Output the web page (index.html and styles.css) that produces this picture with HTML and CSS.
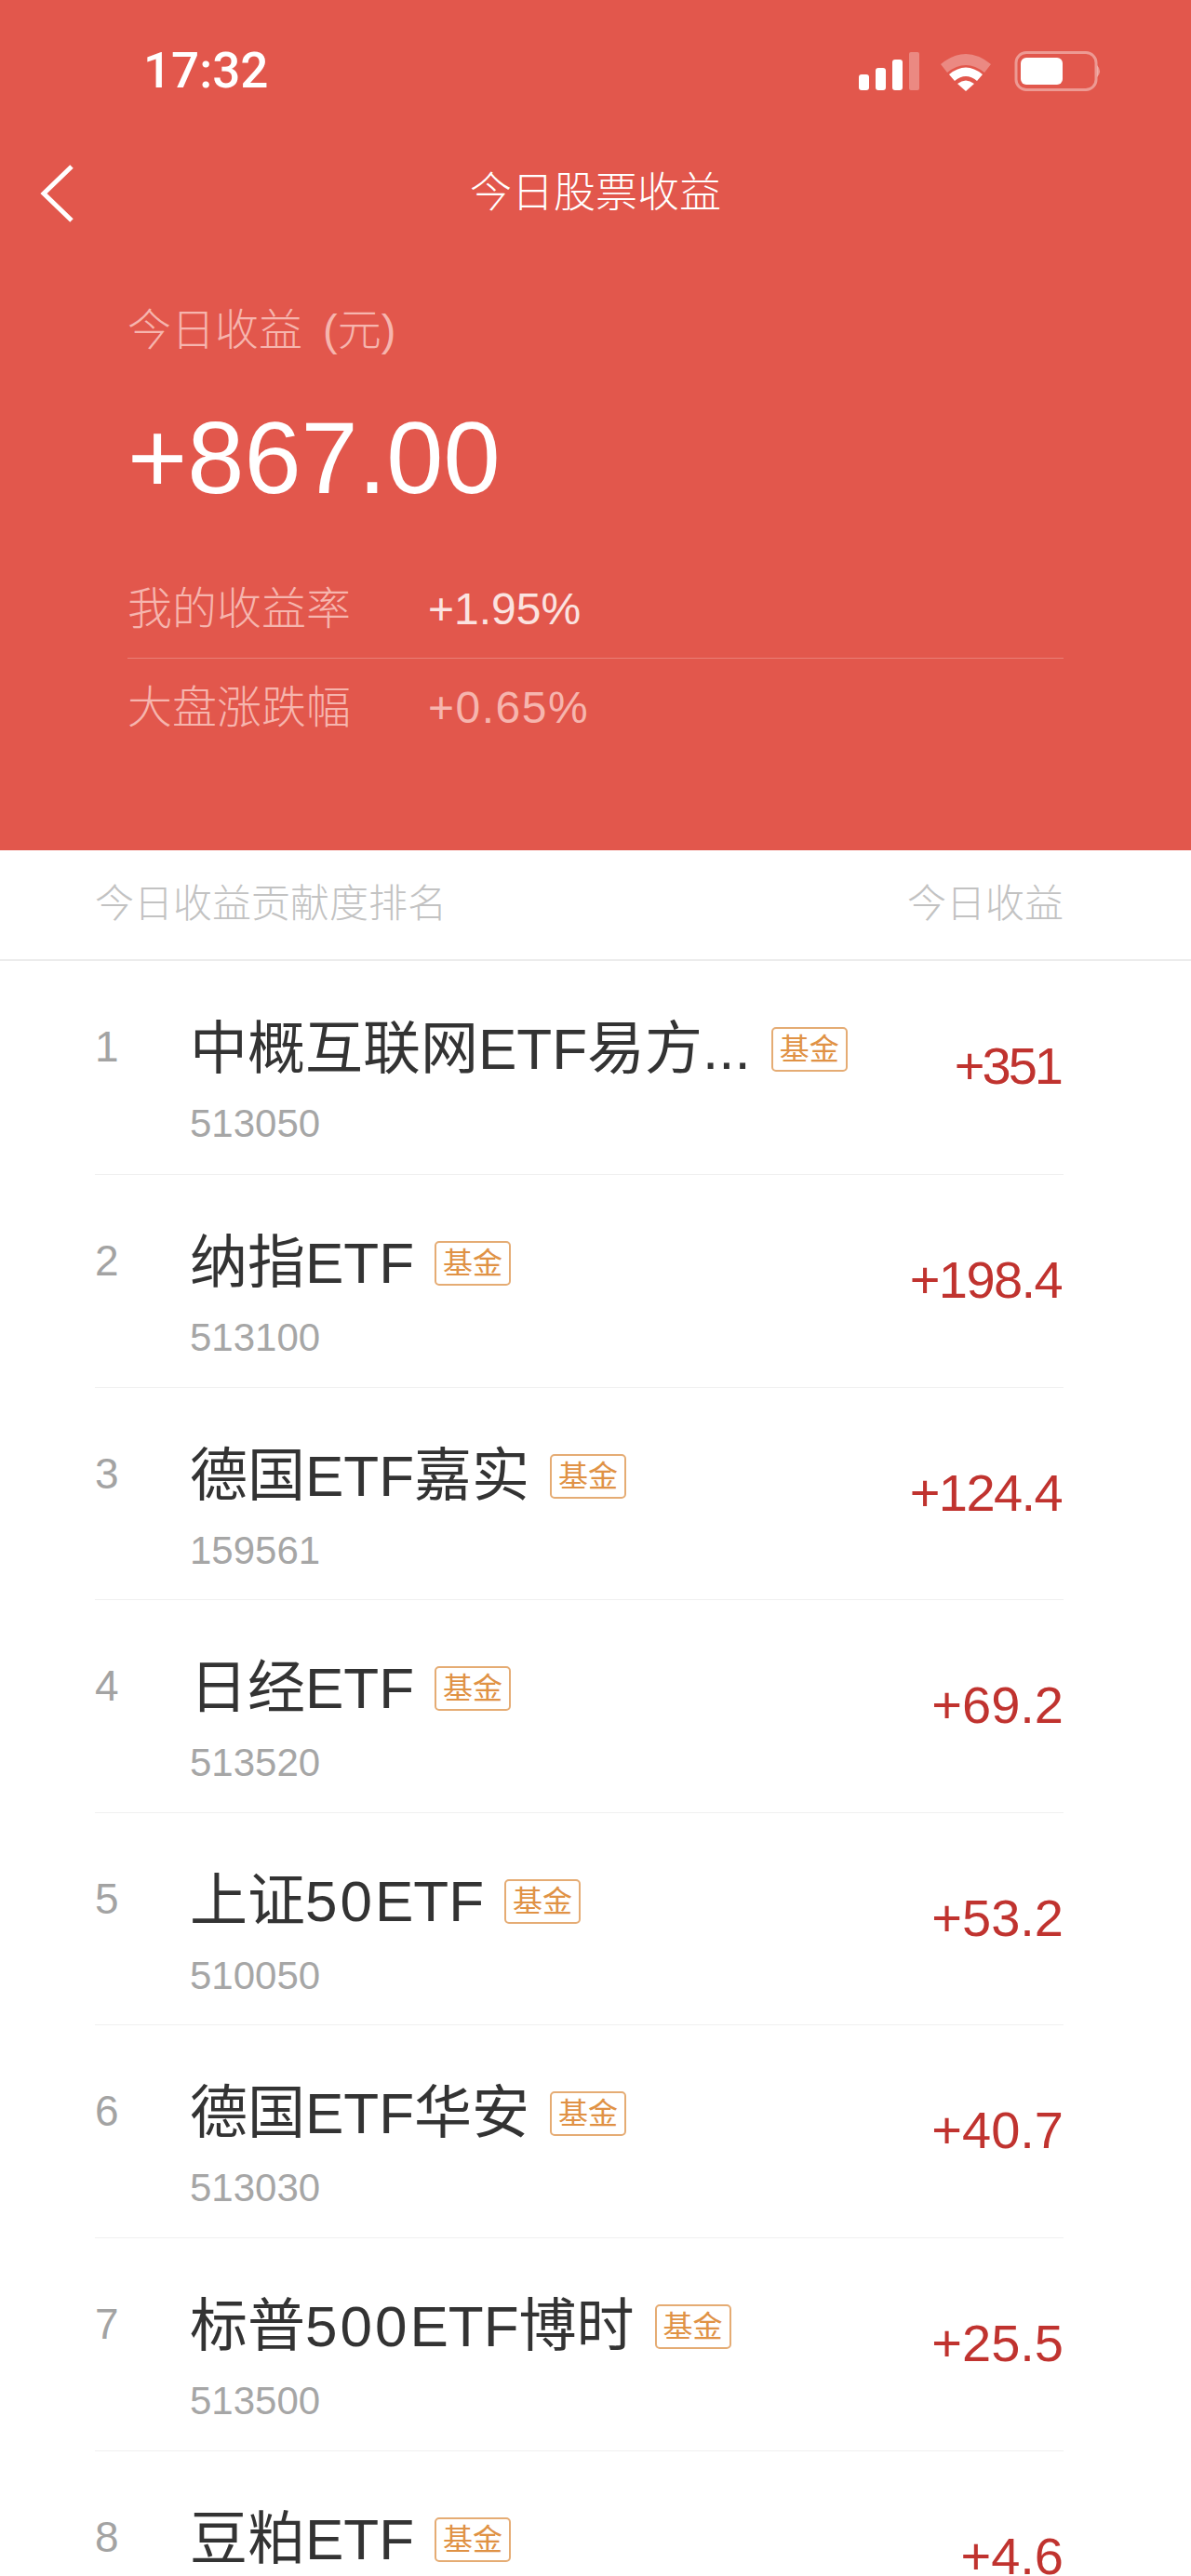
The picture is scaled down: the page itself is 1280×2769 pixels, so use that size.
FILE: index.html
```html
<!DOCTYPE html>
<html lang="zh-CN">
<head>
<meta charset="utf-8">
<title>今日股票收益</title>
<link rel="stylesheet" href="styles.css">
</head>
<body>
<div class="page">
  <header class="hero">
    <div class="status">
      <span class="time">17:32</span>
      <svg class="status-icons" width="264" height="44" viewBox="0 0 264 44">
        <g fill="#fff">
          <rect x="2" y="25" width="11" height="17" rx="3"/>
          <rect x="20" y="18" width="11" height="24" rx="3"/>
          <rect x="38" y="9" width="11" height="33" rx="3"/>
          <rect x="56" y="1" width="11" height="41" rx="2" opacity=".3"/>
        </g>
        <path d="M90 14 Q117 -8 144 14 L137 23 Q117 7 97 23 Z" fill="#fff" opacity=".3"/>
        <path d="M99 25 Q117 10 135 25 L129 32 Q117 22 105 32 Z" fill="#fff"/>
        <path d="M108 35 Q117 28 126 35 L117 43 Z" fill="#fff"/>
        <rect x="171" y="1.5" width="86" height="40" rx="11" fill="none" stroke="#fff" stroke-opacity=".4" stroke-width="3"/>
        <rect x="176" y="7" width="45" height="29" rx="6" fill="#fff"/>
        <path d="M258 15 Q264 21.500 258 28 Z" fill="#fff" opacity=".4"/>
      </svg>
    </div>
    <nav class="nav">
      <svg class="back" width="36" height="62" viewBox="0 0 36 62">
        <path d="M34 2 L4 31 L34 60" fill="none" stroke="#fff" stroke-width="5"/>
      </svg>
      <h1 class="title">今日股票收益</h1>
    </nav>
    <section class="summary">
      <div class="label">今日收益 (元)</div>
      <div class="amount">+867.00</div>
      <div class="stat stat-first">
        <span class="stat-key">我的收益率</span>
        <span class="stat-val">+1.95%</span>
      </div>
      <div class="stat stat-last">
        <span class="stat-key">大盘涨跌幅</span>
        <span class="stat-val stat-dim">+0.65%</span>
      </div>
    </section>
  </header>

  <div class="list-head">
    <span>今日收益贡献度排名</span>
    <span>今日收益</span>
  </div>

  <ul class="list">
    <li class="row"><span class="rank">1</span><div class="info"><div class="name-line"><span class="name">中概互联网ETF易方...</span><span class="tag">基金</span></div><div class="code">513050</div></div><span class="value value-tighter">+351</span></li>
    <li class="row"><span class="rank">2</span><div class="info"><div class="name-line"><span class="name">纳指ETF</span><span class="tag">基金</span></div><div class="code">513100</div></div><span class="value value-tight">+198.4</span></li>
    <li class="row"><span class="rank">3</span><div class="info"><div class="name-line"><span class="name">德国ETF嘉实</span><span class="tag">基金</span></div><div class="code">159561</div></div><span class="value value-tight">+124.4</span></li>
    <li class="row"><span class="rank">4</span><div class="info"><div class="name-line"><span class="name">日经ETF</span><span class="tag">基金</span></div><div class="code">513520</div></div><span class="value">+69.2</span></li>
    <li class="row"><span class="rank">5</span><div class="info"><div class="name-line"><span class="name">上证<span class="digits">50</span>ETF</span><span class="tag">基金</span></div><div class="code">510050</div></div><span class="value">+53.2</span></li>
    <li class="row"><span class="rank">6</span><div class="info"><div class="name-line"><span class="name">德国ETF华安</span><span class="tag">基金</span></div><div class="code">513030</div></div><span class="value">+40.7</span></li>
    <li class="row"><span class="rank">7</span><div class="info"><div class="name-line"><span class="name">标普<span class="digits">500</span>ETF博时</span><span class="tag">基金</span></div><div class="code">513500</div></div><span class="value">+25.5</span></li>
    <li class="row"><span class="rank">8</span><div class="info"><div class="name-line"><span class="name">豆粕ETF</span><span class="tag">基金</span></div></div><span class="value">+4.6</span></li>
  </ul>
</div>
</body>
</html>
```

FILE: styles.css
```css
* { box-sizing: border-box; margin: 0; padding: 0; }
html, body { background: #fff; }
body {
  font-family: "Liberation Sans", "Noto Sans CJK SC", sans-serif;
  font-weight: 400;
}
.page { width: 1280px; height: 2769px; overflow: hidden; }

.hero { height: 914px; background: #e2574c; color: #fff; padding-top: 50px; }

.status {
  height: 52px;
  padding: 0 95px 0 154px;
  display: flex;
  justify-content: space-between;
  align-items: center;
}
.time { font-family: Roboto, sans-serif; font-size: 53px; line-height: 52px; font-weight: 500; }
.status-icons { display: block; margin-top: 2px; }

.nav {
  margin-top: 66px;
  height: 80px;
  display: flex;
  align-items: center;
  justify-content: center;
  position: relative;
}
.back { position: absolute; left: 43px; top: 9px; }
.title { font-size: 45px; line-height: 80px; font-weight: 300; }

.summary { padding: 0 137px; margin-top: 77px; }
.label { font-size: 47px; line-height: 60px; font-weight: 300; word-spacing: 9px; color: #f6b5ae; }
.amount { margin-top: 47px; font-size: 110px; line-height: 120px; }
.stat {
  height: 105px;
  display: flex;
  align-items: center;
  border-bottom: 1px solid #ea7f76;
}
.stat-first { margin-top: 51px; }
.stat-last { border-bottom: 0; }
.stat-key { width: 323px; font-size: 48px; line-height: 60px; font-weight: 300; color: #f6b5ae; }
.stat-val { font-size: 48px; line-height: 60px; color: #fbe3e0; }
.stat-dim { color: #f6b5ae; letter-spacing: 1.5px; }

.list-head {
  height: 119px;
  padding: 0 137px 10px 102px;
  display: flex;
  justify-content: space-between;
  align-items: center;
  border-bottom: 2px solid #ececec;
  font-size: 42px;
  font-weight: 300;
  color: #c2c2c2;
}

.list { list-style: none; padding: 0 137px 0 102px; }
.row {
  height: 228.6px;
  display: flex;
  align-items: flex-start;
  border-bottom: 1px solid #f0f0f0;
}
.row:first-child { height: 230px; }
.rank { width: 102px; margin-top: 62px; font-size: 46px; line-height: 60px; color: #a3a3a3; }
.info { flex: 1; padding-top: 60px; }
.name-line { display: flex; align-items: center; height: 70px; }
.name { font-size: 62px; line-height: 70px; color: #333; font-weight: 400; }
.digits { letter-spacing: 3px; }
.tag {
  margin-left: 22px;
  width: 82px;
  height: 48px;
  border: 2px solid #e5ac74;
  border-radius: 5px;
  font-size: 32px;
  line-height: 44px;
  text-align: center;
  color: #e09245;
}
.code { margin-top: 20px; font-size: 42px; line-height: 50px; color: #a6a6a6; }
.value { margin-top: 78px; font-size: 56px; line-height: 70px; color: #c0332f; }
.value-tight { letter-spacing: -1.6px; padding-right: 2px; }
.value-tighter { letter-spacing: -3px; padding-right: 3px; }
```
